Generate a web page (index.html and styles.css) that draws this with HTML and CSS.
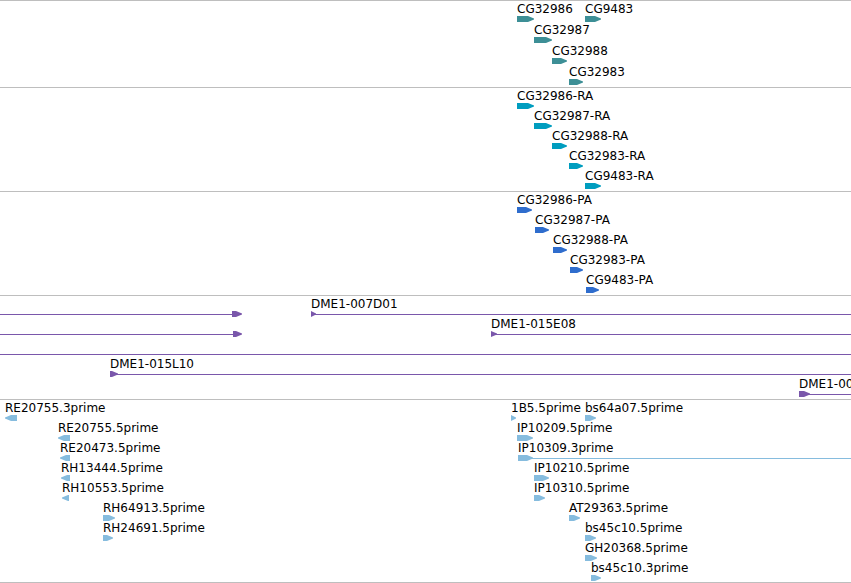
FILE: index.html
```
<!DOCTYPE html>
<html lang="en">
<head>
<meta charset="utf-8">
<title>Genome browser tracks</title>
<link rel="stylesheet" href="styles.css">
</head>
<body>
<main id="browser" class="browser"></main>
<script src="tracks.js"></script>
</body>
</html>
```
FILE: styles.css
```
body {
  margin: 0;
  background: #fff;
  color: #000;
  font: 12px/17px "DejaVu Sans", sans-serif;
}

.browser {
  overflow: hidden;
  border-bottom: 1px solid #bebebe;
}

.track {
  border-top: 1px solid #bebebe;
  padding-bottom: 3px;
}

.track.gene,
.track.est {
  padding-bottom: 2px;
}

.gene { color: #3d8f96; }
.transcript { color: #009dbf; }
.protein { color: #2f6dcd; }
.clone { color: #7a57ab; }
.est { color: #86bcde; }

.row {
  display: grid;
  grid-template-columns: 100%;
  height: 20px;
}

.gene .row {
  height: 21px;
}

/* Features share one cell and start at their own position on the sequence. */
.feature {
  grid-area: 1 / 1;
  margin-left: calc(var(--start) * 1px);
  white-space: nowrap;
}

.label {
  height: 15px;
  color: #000;
}

.glyph {
  display: flex;
  height: 6px;
}

.arrow {
  flex: none;
  width: calc(var(--length) * 1px);
  height: 6px;
  fill: currentColor;
}

.line {
  flex: 1;
  height: 1px;
  margin-top: 3px;
  margin-left: -2px;
  background: currentColor;
}
```
FILE: tracks.js
```
// Feature: [label, start, arrow length, options]
// Options: back (points left), tail (line to the right edge), lead (line before the arrow)
const tracks = [
  ["gene", [
    [["CG32986", 517, 17], ["CG9483", 585, 16]],
    [["CG32987", 534, 18]],
    [["CG32988", 552, 15]],
    [["CG32983", 569, 14]]
  ]],
  ["transcript", [
    [["CG32986-RA", 517, 17]],
    [["CG32987-RA", 534, 18]],
    [["CG32988-RA", 552, 15]],
    [["CG32983-RA", 569, 14]],
    [["CG9483-RA", 585, 16]]
  ]],
  ["protein", [
    [["CG32986-PA", 517, 15]],
    [["CG32987-PA", 535, 14]],
    [["CG32988-PA", 553, 14]],
    [["CG32983-PA", 570, 13]],
    [["CG9483-PA", 586, 13]]
  ]],
  ["clone", [
    [["", 0, 10, { lead: 232 }], ["DME1-007D01", 311, 5, { tail: true }]],
    [["", 0, 9, { lead: 233 }], ["DME1-015E08", 491, 6, { tail: true }]],
    [["", 0, 0, { tail: true }]],
    [["DME1-015L10", 110, 8, { tail: true }]],
    [["DME1-00", 799, 11, { tail: true }]]
  ]],
  ["est", [
    [["RE20755.3prime", 5, 12, { back: true }], ["1B5.5prime", 511, 5], ["bs64a07.5prime", 585, 11]],
    [["RE20755.5prime", 58, 12, { back: true }], ["IP10209.5prime", 517, 16]],
    [["RE20473.5prime", 60, 10, { back: true }], ["IP10309.3prime", 518, 15, { tail: true }]],
    [["RH13444.5prime", 61, 9, { back: true }], ["IP10210.5prime", 534, 15]],
    [["RH10553.5prime", 62, 7, { back: true }], ["IP10310.5prime", 534, 11]],
    [["RH64913.5prime", 103, 12], ["AT29363.5prime", 569, 11]],
    [["RH24691.5prime", 103, 10], ["bs45c10.5prime", 585, 11]],
    [["GH20368.5prime", 585, 12]],
    [["bs45c10.3prime", 591, 10]]
  ]]
];

function arrow(length, back) {
  const neck = Math.max(0, length - 6);
  const shape = `M0 0H${neck}L${length} 2.5V3.5L${neck} 6H0Z`;
  const flip = back ? ` transform="translate(${length} 0) scale(-1 1)"` : "";
  return `<svg class="arrow" style="--length:${length}" viewBox="0 0 ${length} 6" aria-hidden="true"><path d="${shape}"${flip}/></svg>`;
}

function feature([label, start, length, { back, tail, lead } = {}]) {
  const before = lead ? `<svg class="arrow" style="--length:${lead}" viewBox="0 0 ${lead} 6" aria-hidden="true"><path d="M0 3H${lead}V4H0Z"/></svg>` : "";
  const after = tail ? '<span class="line"></span>' : "";
  const shape = length ? arrow(length, back) : "";
  return `<div class="feature" style="--start:${start}"><div class="label">${label}</div>` +
    `<div class="glyph">${before}${shape}${after}</div></div>`;
}

document.getElementById("browser").innerHTML = tracks.map(([kind, rows]) =>
  `<section class="track ${kind}">` +
  rows.map(row => `<div class="row">${row.map(feature).join("")}</div>`).join("") +
  "</section>").join("");
```
